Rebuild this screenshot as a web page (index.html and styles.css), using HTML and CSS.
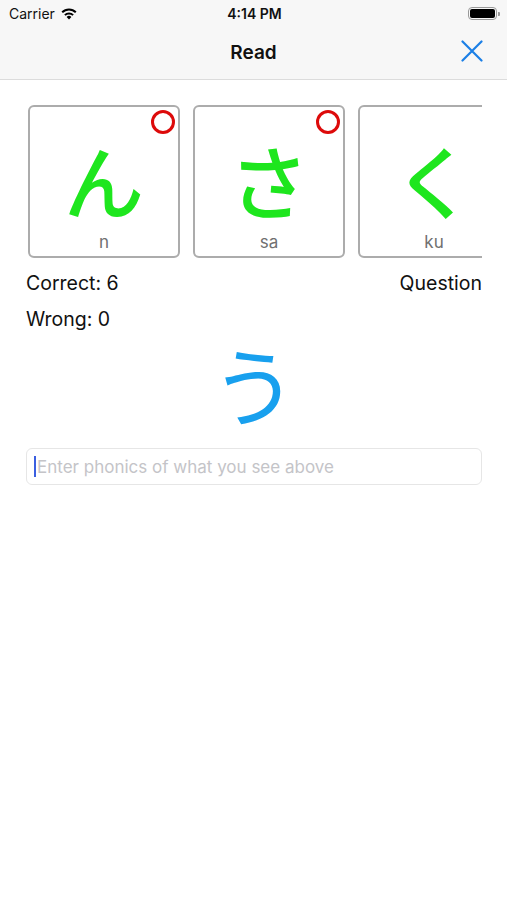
FILE: index.html
```html
<!DOCTYPE html>
<html lang="en">
<head>
    <meta charset="UTF-8">
    <meta name="viewport" content="width=device-width, initial-scale=1.0">
    <title>Read</title>
    <link rel="stylesheet" href="styles.css">
</head>
<body>
    <!-- Status bar -->
    <div class="status-bar">
        <div class="status-left">
            <span>Carrier</span>
            <svg class="wifi" width="16" height="12" viewBox="0 0 16 12">
                <path d="M8 11.5 L5.6 8.9 A3.4 3.4 0 0 1 10.4 8.9 Z" fill="#000"/>
                <path d="M3.9 7.1 A5.8 5.8 0 0 1 12.1 7.1" stroke="#000" stroke-width="2" fill="none"/>
                <path d="M1.2 4.3 A9.6 9.6 0 0 1 14.8 4.3" stroke="#000" stroke-width="2" fill="none"/>
            </svg>
        </div>
        <div class="status-time">4:14 PM</div>
        <div class="status-right">
            <div class="battery"><div class="battery-fill"></div></div>
            <div class="battery-tip"></div>
        </div>
    </div>

    <!-- Navigation bar -->
    <div class="nav-bar">
        <div class="nav-title">Read</div>
        <svg class="nav-close" width="22" height="22" viewBox="0 0 22 22">
            <path d="M1.5 1.5 L20.5 20.5 M20.5 1.5 L1.5 20.5" stroke="#1b7fe6" stroke-width="2.2" stroke-linecap="round"/>
        </svg>
    </div>

    <div class="content">
        <!-- History cards -->
        <div class="card-strip">
            <div class="card">
                <span class="mark"></span>
                <div class="kana">ん</div>
                <div class="romaji">n</div>
            </div>
            <div class="card">
                <span class="mark"></span>
                <div class="kana">さ</div>
                <div class="romaji">sa</div>
            </div>
            <div class="card">
                <div class="kana">く</div>
                <div class="romaji">ku</div>
            </div>
        </div>

        <div class="stats">
            <div class="stat-row">
                <span>Correct: 6</span>
                <span>Question</span>
            </div>
            <div class="stat-row">
                <span>Wrong: 0</span>
            </div>
        </div>

        <div class="question">う</div>

        <div class="answer-box">
            <span class="caret"></span>
            <span class="placeholder">Enter phonics of what you see above</span>
        </div>
    </div>
</body>
</html>
```

FILE: styles.css
```css
* {
    box-sizing: border-box;
    margin: 0;
    padding: 0;
}

body {
    width: 507px;
    height: 900px;
    background: #fff;
    font-family: Inter, "Liberation Sans", Arial, sans-serif;
    color: #111;
    overflow: hidden;
}

/* Status bar */
.status-bar {
    height: 27px;
    background: #f7f7f7;
    display: flex;
    align-items: center;
    justify-content: space-between;
    padding: 0 7px 0 9px;
    font-size: 14px;
}

.status-left {
    display: flex;
    align-items: center;
    gap: 6px;
    width: 120px;
}

.status-time {
    font-weight: 600;
}

.status-right {
    width: 120px;
    display: flex;
    justify-content: flex-end;
    align-items: center;
}

.battery {
    width: 29px;
    height: 13px;
    border: 1px solid #999;
    border-radius: 4px;
    padding: 1px;
}

.battery-fill {
    width: 100%;
    height: 100%;
    background: #000;
    border-radius: 2px;
}

.battery-tip {
    width: 2px;
    height: 4px;
    background: #999;
    margin-left: 1px;
    border-radius: 0 1px 1px 0;
}

/* Navigation bar */
.nav-bar {
    height: 53px;
    background: #f7f7f7;
    border-bottom: 1px solid #dcdcdc;
    display: flex;
    align-items: center;
    justify-content: center;
    position: relative;
}

.nav-title {
    font-size: 19px;
    font-weight: 600;
    margin-top: -2px;
}

.nav-close {
    position: absolute;
    right: 24px;
    top: 13px;
}

/* Content */
.content {
    padding: 25px 25px 0 26px;
}

.card-strip {
    display: flex;
    gap: 13px;
    overflow: hidden;
    padding-left: 2px;
}

.card {
    flex: 0 0 152px;
    height: 153px;
    border: 2px solid #acacac;
    border-radius: 6px;
    position: relative;
    display: flex;
    flex-direction: column;
    align-items: center;
    padding-bottom: 4px;
}

.mark {
    position: absolute;
    right: 3px;
    top: 3px;
    width: 24px;
    height: 24px;
    border: 3.5px solid #dd0a0a;
    border-radius: 50%;
}

.kana {
    font-family: "Noto Sans CJK JP", sans-serif;
    font-size: 80px;
    font-weight: 500;
    line-height: 90px;
    color: #1ee61e;
    margin-top: 26px;
}

.romaji {
    margin-top: auto;
    font-size: 17px;
    color: #707070;
    line-height: 20px;
}

.stats {
    margin-top: 13px;
    display: flex;
    flex-direction: column;
    gap: 12px;
}

.stat-row {
    display: flex;
    justify-content: space-between;
    font-size: 19.5px;
    line-height: 24px;
    white-space: nowrap;
    overflow: hidden;
}

.question {
    text-align: center;
    font-family: "Noto Sans CJK JP", sans-serif;
    font-size: 86px;
    line-height: 104px;
    color: #18a0ee;
}

.answer-box {
    margin-top: 13px;
    height: 37px;
    border: 1px solid #e6e6e6;
    border-radius: 6px;
    display: flex;
    align-items: center;
    padding-left: 7px;
}

.caret {
    width: 2px;
    height: 21px;
    background: #3b5fe0;
    margin-right: 1px;
}

.placeholder {
    font-size: 17px;
    color: #c4c4c8;
}
```
